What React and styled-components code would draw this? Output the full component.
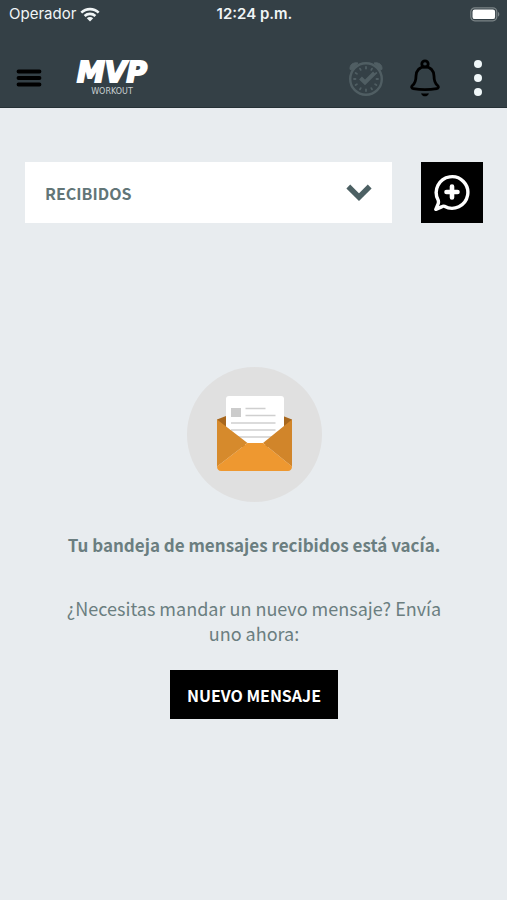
import { useState } from 'react'
import styled, { createGlobalStyle } from 'styled-components'

const GlobalStyle = createGlobalStyle`
  * {
    box-sizing: border-box;
  }
  body {
    margin: 0;
    background: #e8ecef;
    color: #6b7e80;
    font-family: 'Noto Sans CJK SC', 'Noto Sans', sans-serif;
  }
  button, select {
    font-family: inherit;
    border: none;
    cursor: pointer;
  }
  svg {
    display: block;
  }
`

const StyledHeader = styled.header`
  background: #344046;
  border-bottom: 1px solid #263136;
`

const StyledStatusBar = styled.div`
  display: grid;
  grid-template-columns: 1fr auto 1fr;
  align-items: center;
  height: 28px;
  padding: 0 7px 0 9px;
  color: #f0f5f6;
  font-family: Inter, sans-serif;
  font-size: 15px;
  line-height: 20px;
`

const StyledCarrier = styled.div`
  display: flex;
  align-items: center;
  gap: 4px;
`

const StyledTime = styled.time`
  font-weight: 600;
`

const StyledBattery = styled.div`
  display: flex;
  justify-content: flex-end;
`

const StyledNav = styled.nav`
  display: flex;
  align-items: center;
  height: 79px;
  padding: 21px 17px 0 16px;
`

const StyledIconButton = styled.button`
  display: flex;
  padding: 0;
  background: transparent;
`

const StyledLogo = styled.a`
  display: flex;
  flex-direction: column;
  align-items: center;
  width: 96px;
  margin-left: 22px;
  color: #ffffff;
  font-family: 'DejaVu Sans', sans-serif;
  font-weight: 700;
  text-decoration: none;
`

const StyledLogoName = styled.span`
  font-size: 28px;
  font-style: italic;
  line-height: 24px;
  -webkit-text-stroke: 2px #ffffff;
`

const StyledLogoTagline = styled.span`
  margin-top: 3px;
  color: #c9d0d2;
  font-size: 8px;
  font-weight: 400;
  line-height: 8px;
`

const StyledActions = styled.div`
  display: flex;
  align-items: center;
  gap: 26px;
  margin-left: auto;
`

const StyledMain = styled.main`
  padding: 54px 24px 54px 25px;
`

const StyledToolbar = styled.div`
  display: flex;
  gap: 29px;
`

const StyledSelectBox = styled.div`
  position: relative;
  flex: 1;
  svg {
    position: absolute;
    top: 50%;
    right: 20px;
    transform: translateY(-50%);
    pointer-events: none;
  }
`

const StyledSelect = styled.select`
  appearance: none;
  width: 100%;
  height: 61px;
  padding: 0 56px 0 20px;
  border-radius: 0;
  background: #ffffff;
  color: #627577;
  font-size: 16px;
  font-weight: 700;
`

const StyledComposeButton = styled.button`
  display: flex;
  align-items: center;
  justify-content: center;
  width: 62px;
  height: 61px;
  padding: 0;
  background: #000000;
`

const StyledEmptyState = styled.section`
  display: flex;
  flex-direction: column;
  align-items: center;
  padding-top: 144px;
  text-align: center;
`

const StyledTitle = styled.h1`
  margin: 30px 0 0;
  font-size: 17px;
  font-weight: 700;
  line-height: 25px;
`

const StyledText = styled.p`
  max-width: 380px;
  margin: 39px 0 0;
  font-size: 18px;
  line-height: 25px;
`

const StyledNewButton = styled.button`
  height: 49px;
  margin-top: 24px;
  padding: 0 17px;
  background: #000000;
  color: #ffffff;
  font-size: 16px;
  font-weight: 700;
`

const WifiIcon = () => (
  <svg width="20" height="15" viewBox="0 0 20 15" fill="none" stroke="#f0f5f6" strokeWidth="2.6">
    <path d="M1.3 5.6a12.6 12.6 0 0 1 17.4 0" />
    <path d="M4.6 9a7.9 7.9 0 0 1 10.8 0" />
    <path d="M10 14.6 6.8 11.3a4.6 4.6 0 0 1 6.4 0z" fill="#f0f5f6" stroke="none" />
  </svg>
)

const BatteryIcon = () => (
  <svg width="30" height="15" viewBox="0 0 30 15">
    <rect x="0.8" y="0.8" width="26" height="13" rx="4" fill="none" stroke="#7b8487" strokeWidth="1.2" />
    <rect x="2.5" y="2.5" width="22.6" height="9.6" rx="2.2" fill="#ffffff" />
    <path d="M28 5v4.6c1.8-.7 1.8-3.9 0-4.6z" fill="#7b8487" />
  </svg>
)

const MenuIcon = () => (
  <svg width="26" height="18" viewBox="0 0 26 18" stroke="#000000" strokeWidth="3.8" strokeLinecap="round">
    <path d="M2.5 2.5h21M2.5 9h21M2.5 15.5h21" />
  </svg>
)

const ClockIcon = () => (
  <svg width="36" height="38" viewBox="0 0 36 38" fill="none" stroke="#505e63" strokeWidth="2.4" strokeLinecap="round">
    <circle cx="18" cy="20" r="15.8" />
    <path d="M2 10C1.4 6 5 3 10 4L4.5 10.500zM34 10c.6-4-3-7-8-6l5.500 6.500z" fill="#505e63" strokeWidth="1" />
    <path
      d="M18 8v1.5M18 30.5V32M6 20h1.5M28.5 20H30M12 9.6l.7 1.3M24 9.6l-.7 1.3M7.6 14l1.3.7M28.4 14l-1.3.7M7.6 26l1.3-.7M28.4 26l-1.3-.7M12 30.4l.7-1.3M24 30.4l-.7-1.3"
      strokeWidth="1.8"
    />
    <path d="m12.5 19 4.5 4.5 9.5-9.5" strokeWidth="4" strokeLinecap="butt" />
  </svg>
)

const BellIcon = () => (
  <svg width="30" height="38" viewBox="0 0 30 38" fill="none" stroke="#000000" strokeWidth="2.8" strokeLinecap="round" strokeLinejoin="round">
    <circle cx="15" cy="5" r="3.2" />
    <path d="M15 7.8C9.4 7.8 6 12 6 17c0 5-1 7.500-3.600 9.500-1.300 1.200-.8 3 .8 3.200 8 1.200 15.600 1.200 23.600 0 1.600-.2 2.100-2 .8-3.200C25 24.500 24 22 24 17c0-5-3.400-9.200-9-9.200z" />
    <path d="M11.2 34.200c2.500.5 5.100.5 7.600 0-.6 4.200-7 4.200-7.600 0z" fill="#000000" stroke="none" />
  </svg>
)

const DotsIcon = () => (
  <svg width="24" height="38" viewBox="0 0 24 38" fill="#f0f7f9">
    <circle cx="12" cy="5" r="4" />
    <circle cx="12" cy="19" r="4" />
    <circle cx="12" cy="33" r="4" />
  </svg>
)

const ChevronIcon = () => (
  <svg width="26" height="18" viewBox="0 0 26 18" fill="none" stroke="#4c6063" strokeWidth="5.4">
    <path d="M2.3 2.5 13 13.2 23.7 2.5" />
  </svg>
)

const ComposeIcon = () => (
  <svg width="38" height="38" viewBox="0 0 38 38" fill="none" stroke="#ffffff" strokeLinecap="round" strokeLinejoin="round">
    <path d="M11.4 32.3a15.8 15.8 0 1 0-6.400-6.600c.6 1.400.6 2.700.2 4L2.800 35.400l5.800-2.500c1-.7 1.900-1 2.800-.6z" strokeWidth="3.4" />
    <path d="M19 12.5v11M13.5 18h11" strokeWidth="4.6" />
  </svg>
)

const EnvelopeIllustration = () => (
  <svg width="135" height="135" viewBox="0 0 135 135" aria-hidden="true">
    <circle cx="67.5" cy="67.5" r="67.5" fill="#e0e0e0" />
    <path d="M30 52.5 39 49h57l9 3.5V80H30z" fill="#a8671d" />
    <path d="M42 29h52a3 3 0 0 1 3 3v46H39V32a3 3 0 0 1 3-3z" fill="#ffffff" />
    <rect x="44" y="41" width="10" height="9" fill="#cccccc" />
    <path d="M58.5 41.5h20M58.5 48.5h30M44 56h44.5M44 63h44.5M49 70h36" stroke="#cfcfcf" strokeWidth="1.6" />
    <path d="M30 52.5v47L60.5 76z" fill="#d68a2c" />
    <path d="M105 52.5v47L76 76z" fill="#d1852a" />
    <path d="M60.5 76 30 99.5c0 2.900 1.700 4.500 4 4.500h67c2.300 0 4-1.600 4-4.500L76 76z" fill="#ee9830" />
  </svg>
)

const folders = ['RECIBIDOS', 'ENVIADOS']

const Header = () => (
  <StyledHeader>
    <StyledStatusBar>
      <StyledCarrier>
        Operador
        <WifiIcon />
      </StyledCarrier>
      <StyledTime>12:24 p.m.</StyledTime>
      <StyledBattery>
        <BatteryIcon />
      </StyledBattery>
    </StyledStatusBar>
    <StyledNav>
      <StyledIconButton aria-label="Menú">
        <MenuIcon />
      </StyledIconButton>
      <StyledLogo href="#">
        <StyledLogoName>MVP</StyledLogoName>
        <StyledLogoTagline>WORKOUT</StyledLogoTagline>
      </StyledLogo>
      <StyledActions>
        <StyledIconButton aria-label="Entrenamientos">
          <ClockIcon />
        </StyledIconButton>
        <StyledIconButton aria-label="Notificaciones">
          <BellIcon />
        </StyledIconButton>
        <StyledIconButton aria-label="Más opciones">
          <DotsIcon />
        </StyledIconButton>
      </StyledActions>
    </StyledNav>
  </StyledHeader>
)

const App = () => {
  const [folder, setFolder] = useState(folders[0])

  return (
    <>
      <GlobalStyle />
      <Header />
      <StyledMain>
        <StyledToolbar>
          <StyledSelectBox>
            <StyledSelect
              aria-label="Bandeja"
              value={folder}
              onChange={(e) => setFolder(e.target.value)}
            >
              {folders.map((name) => (
                <option key={name}>{name}</option>
              ))}
            </StyledSelect>
            <ChevronIcon />
          </StyledSelectBox>
          <StyledComposeButton aria-label="Nuevo mensaje">
            <ComposeIcon />
          </StyledComposeButton>
        </StyledToolbar>
        <StyledEmptyState>
          <EnvelopeIllustration />
          <StyledTitle>Tu bandeja de mensajes recibidos está vacía.</StyledTitle>
          <StyledText>
            ¿Necesitas mandar un nuevo mensaje? Envía uno ahora:
          </StyledText>
          <StyledNewButton>NUEVO MENSAJE</StyledNewButton>
        </StyledEmptyState>
      </StyledMain>
    </>
  )
}

export default App
